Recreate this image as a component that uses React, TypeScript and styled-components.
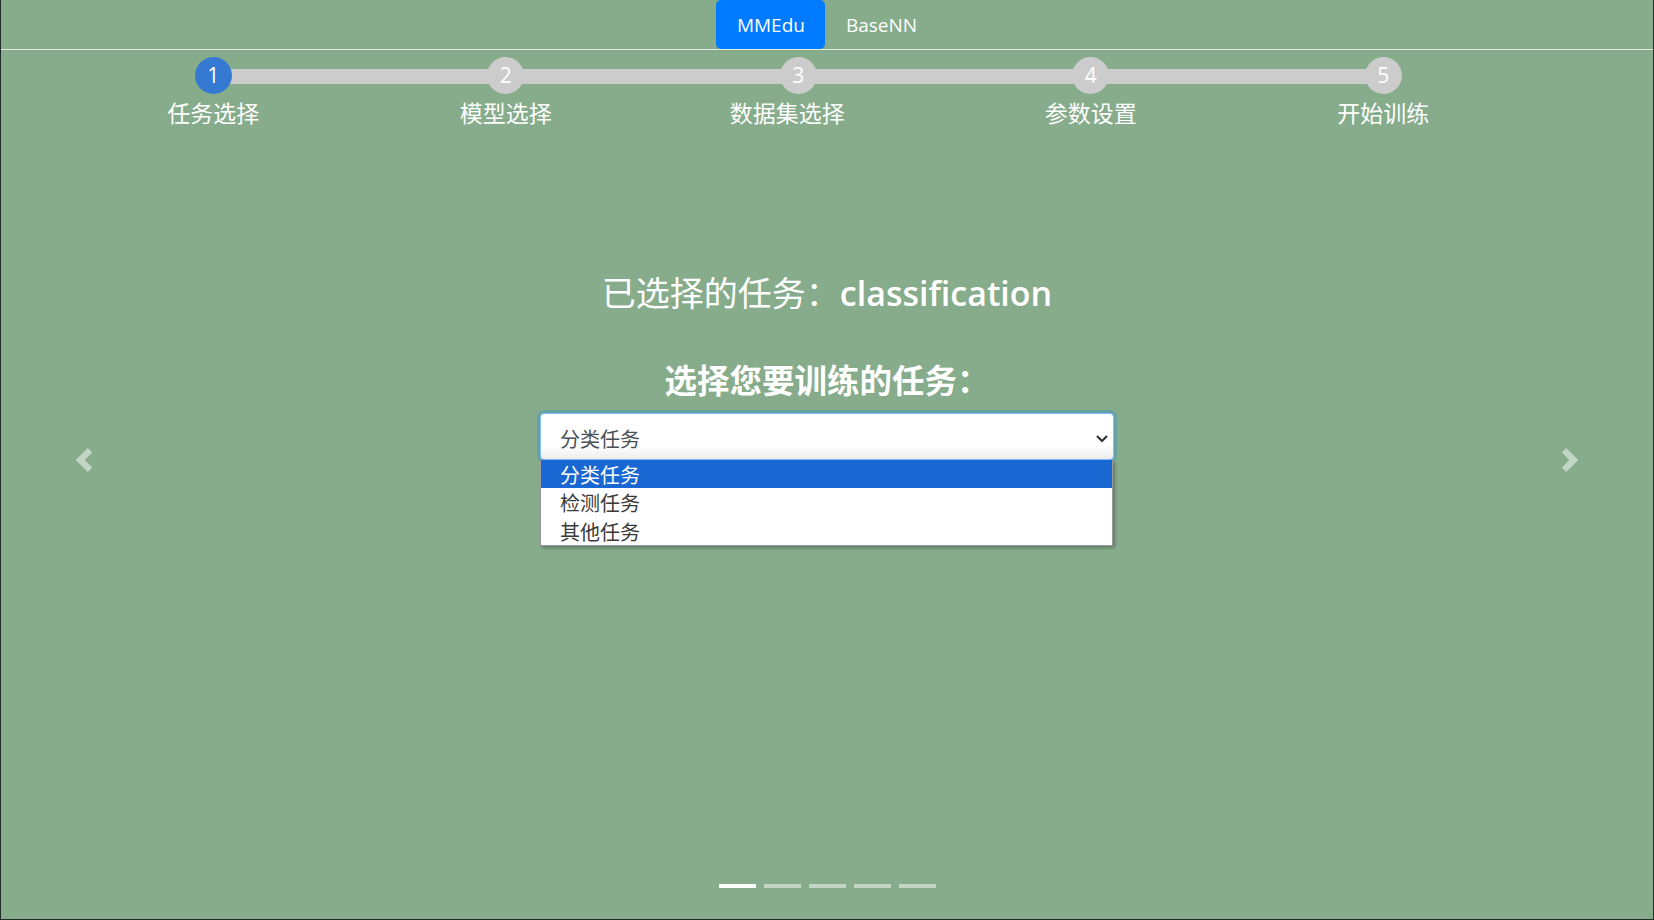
import React from "react";
import styled, { createGlobalStyle } from "styled-components";

const GlobalStyle = createGlobalStyle`
  html, body { margin: 0; padding: 0; }
  body {
    font-family: "Open Sans", "Noto Sans CJK SC", sans-serif;
    background: #86ac8b;
  }
  * { box-sizing: border-box; }
`;

const Page = styled.div`
  position: relative;
  width: 1654px;
  height: 920px;
  display: flex;
  flex-direction: column;
  background: #86ac8b;
  border-left: 1px solid #1f2e27;
  border-right: 1px solid #1f2e27;
  border-bottom: 1px solid #1f2e27;
  overflow: hidden;
`;

const NavBar = styled.nav`
  height: 50px;
  display: flex;
  justify-content: center;
  border-bottom: 1px solid #e2ece2;
`;

const Tab = styled.div<{ $active?: boolean }>`
  height: 49px;
  padding: 2px 20.5px 0;
  line-height: 47px;
  font-family: "Open Sans", sans-serif;
  font-size: 19px;
  color: #ffffff;
  border-radius: 5px;
  background: ${(p) => (p.$active ? "#007bff" : "transparent")};
`;

const Stepper = styled.div`
  display: grid;
  grid-template-columns: repeat(5, 292.5px);
  padding: 7px 0 0 66px;
`;

const Step = styled.div<{ $last?: boolean }>`
  position: relative;
  display: flex;
  flex-direction: column;
  align-items: center;
  &::after {
    content: "";
    display: ${(p) => (p.$last ? "none" : "block")};
    position: absolute;
    left: 50%;
    width: 100%;
    top: 12px;
    height: 15px;
    background: #cccccc;
    z-index: 0;
  }
`;

const Circle = styled.div<{ $active?: boolean }>`
  position: relative;
  z-index: 1;
  width: 37px;
  height: 37px;
  border-radius: 50%;
  background: ${(p) => (p.$active ? "#3579d3" : "#cccccc")};
  color: #ffffff;
  font-family: "Open Sans", sans-serif;
  font-size: 21px;
  line-height: 37px;
  text-align: center;
`;

const StepLabel = styled.div<{ $shift: number }>`
  margin-top: 4px;
  margin-right: ${(p) => p.$shift * 2}px;
  font-family: "Noto Sans CJK SC", sans-serif;
  font-size: 23px;
  line-height: 28px;
  color: #ffffff;
  white-space: nowrap;
`;

const Slide = styled.main`
  flex: 1;
  display: flex;
  flex-direction: column;
  align-items: center;
  padding-top: 147px;
`;

const Title = styled.h2`
  margin: 0;
  font-family: "Open Sans", "Noto Sans CJK SC", sans-serif;
  font-size: 34px;
  line-height: 40px;
  font-weight: 400;
  color: #ffffff;
`;

const TitleValue = styled.span`
  font-weight: 600;
`;

const Prompt = styled.h3`
  margin: 47px 0 0;
  font-family: "Noto Sans CJK SC", sans-serif;
  font-size: 32.5px;
  line-height: 38px;
  font-weight: 700;
  color: #ffffff;
`;

const SelectWrap = styled.div`
  position: relative;
  margin-top: 15px;
  width: 574px;
`;

const SelectBox = styled.div`
  height: 47px;
  display: flex;
  align-items: center;
  justify-content: space-between;
  padding: 3px 4px 0 19px;
  border: 1px solid #80bdff;
  border-radius: 4px;
  background: linear-gradient(#ffffff 70%, #ececec);
  box-shadow: 0 0 0 3px rgba(0, 123, 255, 0.22);
  font-family: "Noto Sans CJK SC", sans-serif;
  font-size: 20px;
  color: #495057;
`;

const OptionList = styled.ul`
  position: absolute;
  top: 100%;
  left: 0;
  width: 573px;
  margin: 0;
  padding: 0;
  list-style: none;
  background: #ffffff;
  border: 1px solid #9a9a9a;
  border-top: none;
  box-shadow: 2px 2px 3px rgba(0, 0, 0, 0.28);
`;

const Option = styled.li<{ $selected?: boolean }>`
  height: 28.3px;
  display: flex;
  align-items: center;
  padding: 2px 0 0 19px;
  line-height: 26px;
  font-family: "Noto Sans CJK SC", sans-serif;
  font-size: 20px;
  color: ${(p) => (p.$selected ? "#ffffff" : "#3a3a3a")};
  background: ${(p) => (p.$selected ? "#1967d2" : "transparent")};
`;

const Indicators = styled.ol`
  display: flex;
  justify-content: center;
  gap: 8px;
  margin: 0;
  padding: 0 0 31px;
  list-style: none;
`;

const Indicator = styled.li<{ $active?: boolean }>`
  width: 37px;
  height: 4px;
  background: ${(p) => (p.$active ? "#ffffff" : "rgba(255,255,255,0.5)")};
`;

const Control = styled.div<{ $side: "left" | "right" }>`
  position: absolute;
  top: 0;
  bottom: 0;
  ${(p) => (p.$side === "left" ? "left: 0;" : "right: 0;")}
  width: 166px;
  display: flex;
  align-items: center;
  justify-content: center;
`;

const steps = [
  { label: "任务选择", shift: 0 },
  { label: "模型选择", shift: 0 },
  { label: "数据集选择", shift: 11 },
  { label: "参数设置", shift: 0 },
  { label: "开始训练", shift: 0 },
];
const options = ["分类任务", "检测任务", "其他任务"];

export default function App() {
  return (
    <>
      <GlobalStyle />
      <Page>
        <NavBar>
          <Tab $active>MMEdu</Tab>
          <Tab>BaseNN</Tab>
        </NavBar>
        <Stepper>
          {steps.map((s, i) => (
            <Step key={s.label} $last={i === steps.length - 1}>
              <Circle $active={i === 0}>{i + 1}</Circle>
              <StepLabel $shift={s.shift}>{s.label}</StepLabel>
            </Step>
          ))}
        </Stepper>
        <Slide>
          <Title>
            已选择的任务：<TitleValue>classification</TitleValue>
          </Title>
          <Prompt>选择您要训练的任务：</Prompt>
          <SelectWrap>
            <SelectBox role="combobox" aria-expanded="true">
              <span>分类任务</span>
              <svg width="14" height="9" viewBox="0 0 14 9">
                <polyline points="2,2 7,7 12,2" fill="none" stroke="#333" strokeWidth="2.2" />
              </svg>
            </SelectBox>
            <OptionList role="listbox">
              {options.map((o, i) => (
                <Option key={o} $selected={i === 0}>
                  {o}
                </Option>
              ))}
            </OptionList>
          </SelectWrap>
        </Slide>
        <Indicators>
          {[0, 1, 2, 3, 4].map((i) => (
            <Indicator key={i} $active={i === 0} />
          ))}
        </Indicators>
        <Control $side="left">
          <svg width="24" height="24" viewBox="0 0 8 8">
            <path d="M5.25 0l-4 4 4 4 1.5-1.5L4.25 4l2.5-2.5L5.25 0z" fill="rgba(255,255,255,0.5)" />
          </svg>
        </Control>
        <Control $side="right">
          <svg width="24" height="24" viewBox="0 0 8 8">
            <path d="M2.75 0l-1.5 1.5L3.75 4l-2.5 2.5L2.75 8l4-4-4-4z" fill="rgba(255,255,255,0.5)" />
          </svg>
        </Control>
      </Page>
    </>
  );
}
